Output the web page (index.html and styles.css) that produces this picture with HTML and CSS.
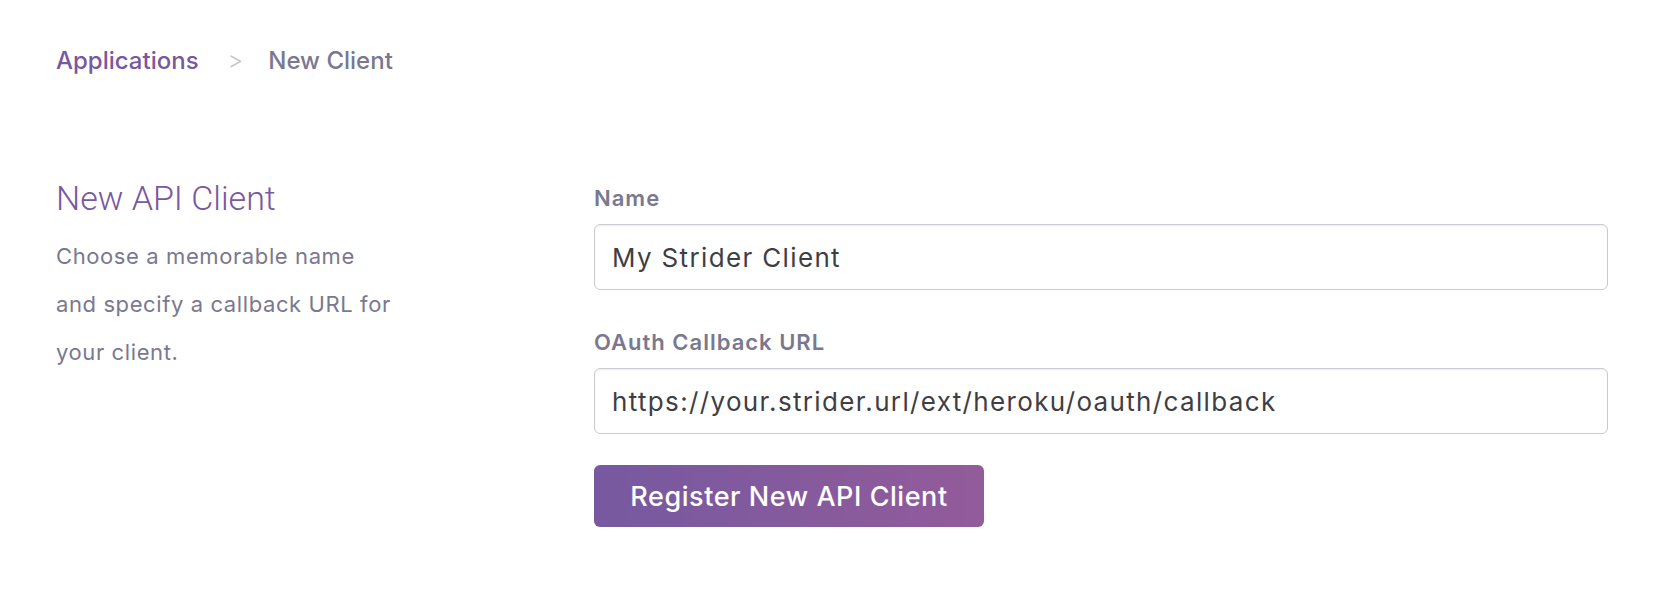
FILE: index.html
```html
<!DOCTYPE html>
<html lang="en">
<head>
<meta charset="utf-8">
<title>New Client</title>
<link rel="stylesheet" href="styles.css">
</head>
<body>
  <nav class="breadcrumb">
    <a class="crumb-link" href="#">Applications</a>
    <span class="crumb-sep">&gt;</span>
    <span class="crumb-current">New Client</span>
  </nav>
  <main class="content">
    <section class="intro">
      <h1 class="intro-title">New API Client</h1>
      <p class="intro-text">Choose a memorable name and specify a callback URL for your client.</p>
    </section>
    <form class="client-form">
      <label class="field-label" for="name">Name</label>
      <input class="field-input" id="name" type="text" value="My Strider Client">
      <label class="field-label second" for="callback">OAuth Callback URL</label>
      <input class="field-input" id="callback" type="text" value="https://your.strider.url/ext/heroku/oauth/callback">
      <div class="actions">
        <button class="submit-btn" type="button">Register New API Client</button>
      </div>
    </form>
  </main>
</body>
</html>
```

FILE: styles.css
```css
html, body {
  margin: 0;
  padding: 0;
  background: #ffffff;
}

body {
  font-family: Inter, "Liberation Sans", sans-serif;
  color: #79778c;
}

.breadcrumb {
  display: flex;
  align-items: baseline;
  padding: 46px 0 0 56px;
  font-size: 24px;
  line-height: 29px;
  font-weight: 500;
}

.crumb-link {
  color: #79589f;
  text-decoration: none;
}

.crumb-sep {
  color: #c6c5cf;
  font-size: 24px;
  font-weight: 300;
  margin: 0 25px 0 29px;
}

.crumb-current {
  color: #7a7890;
}

.content {
  display: flex;
  padding: 103px 58px 0 56px;
}

.intro {
  width: 538px;
  flex: none;
}

.intro-title {
  margin: 0;
  font-family: Roboto, "Liberation Sans", sans-serif;
  font-weight: 300;
  font-size: 34px;
  line-height: 40px;
  color: #79589f;
}

.intro-text {
  margin: 14px 0 0 0;
  width: 340px;
  font-size: 22px;
  line-height: 48px;
  letter-spacing: 0.6px;
  color: #7a7890;
}

.client-form {
  flex: 1;
  display: flex;
  flex-direction: column;
  padding-top: 8px;
}

.field-label {
  font-size: 22px;
  line-height: 24px;
  font-weight: 600;
  letter-spacing: 1px;
  color: #7a7890;
}

.field-label.second {
  margin-top: 40px;
}

.field-input {
  margin-top: 14px;
  box-sizing: border-box;
  height: 66px;
  width: 100%;
  padding: 0 17px;
  border: 1px solid #cbcad2;
  border-radius: 6px;
  box-shadow: inset 0 1px 2px rgba(0, 0, 0, 0.08);
  font-family: Inter, "Liberation Sans", sans-serif;
  font-size: 26px;
  letter-spacing: 1.35px;
  color: #3f3e45;
  background: #ffffff;
  outline: none;
}

.actions {
  margin-top: 31px;
}

.submit-btn {
  width: 390px;
  height: 62px;
  border: none;
  border-radius: 6px;
  background: linear-gradient(to right, #7659a0, #935b9a);
  color: #ffffff;
  font-family: Inter, "Liberation Sans", sans-serif;
  font-size: 27px;
  font-weight: 500;
  letter-spacing: 0.55px;
  cursor: pointer;
}
```
